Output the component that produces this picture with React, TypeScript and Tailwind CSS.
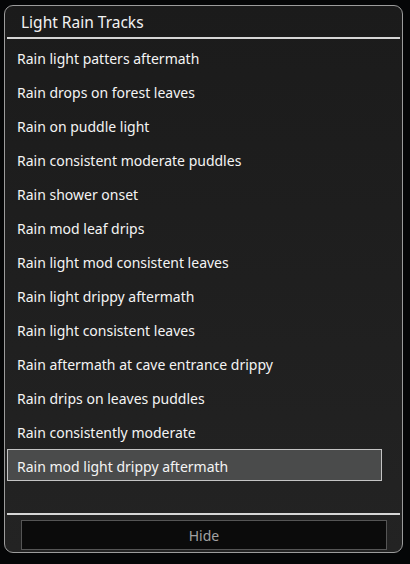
import { useState } from 'react';

const TRACKS = [
  'Rain light patters aftermath',
  'Rain drops on forest leaves',
  'Rain on puddle light',
  'Rain consistent moderate puddles',
  'Rain shower onset',
  'Rain mod leaf drips',
  'Rain light mod consistent leaves',
  'Rain light drippy aftermath',
  'Rain light consistent leaves',
  'Rain aftermath at cave entrance drippy',
  'Rain drips on leaves puddles',
  'Rain consistently moderate',
  'Rain mod light drippy aftermath'
];

export default function App() {
  const [selected, setSelected] = useState(TRACKS.length - 1);

  return (
    <div
      className="w-[410px] h-[564px] bg-[#050607] pt-[5px] pl-[4px]"
      style={{ fontFamily: '"Noto Sans", "Open Sans", sans-serif' }}
    >
      <div className="w-[399px] h-[548px] flex flex-col rounded-[9px] border border-[#9c9c9c] bg-gradient-to-b from-[#1b1b1b] to-[#232323] overflow-hidden">
        <div className="h-[31px] flex items-center pl-[16px] pt-[2px] text-[15.5px] text-[#f2f2f2]">
          Light Rain Tracks
        </div>
        <div className="h-[2px] mx-[2px] bg-[#d6d6d6]" />

        <div className="flex-1 pt-[1px]">
          {TRACKS.map((name, i) => (
            <div key={name} className="h-[34px] py-[1px] pl-[2px] pr-[20px]">
              <button
                type="button"
                onClick={() => setSelected(i)}
                className={`w-full h-full flex items-center pl-[9px] pt-[2px] text-left text-[14px] text-[#f4f4f4] border ${
                  i === selected ? 'bg-[#4a4b4b] border-[#c4c4c4]' : 'border-transparent'
                }`}
              >
                {name}
              </button>
            </div>
          ))}
        </div>

        <div className="h-[2px] mx-[2px] bg-[#d6d6d6]" />
        <div className="h-[37px] pt-[5px] pl-[16px] pr-[15px]">
          <button
            type="button"
            className="w-full h-[30px] flex items-center justify-center bg-[#0b0b0b] border border-[#555555] text-[14px] text-[#a2a2a2]"
          >
            Hide
          </button>
        </div>
      </div>
    </div>
  );
}
